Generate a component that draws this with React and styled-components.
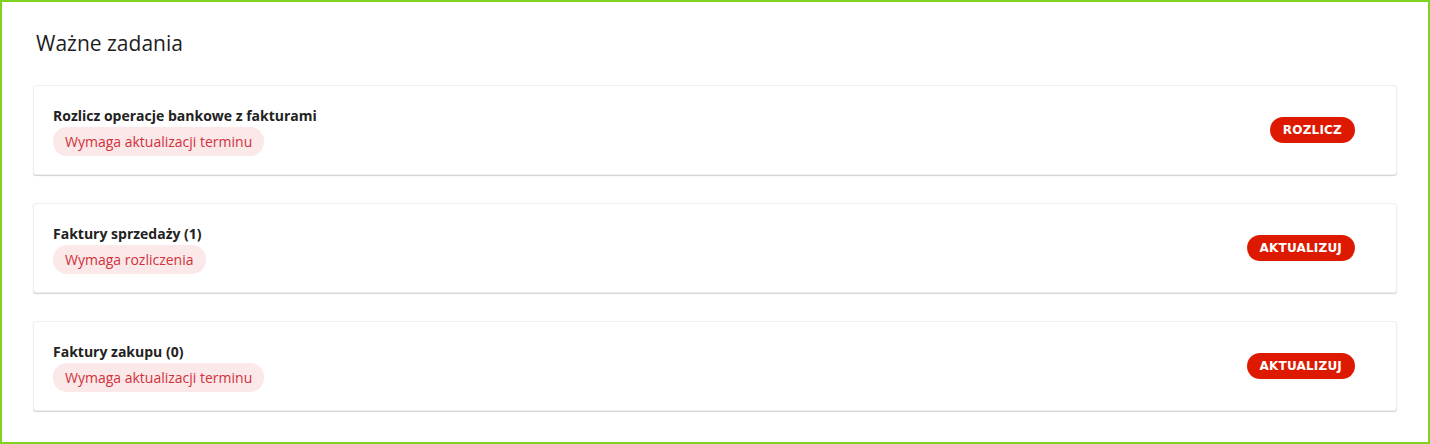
import React from "react";
import styled, { createGlobalStyle } from "styled-components";

const Global = createGlobalStyle`
  html, body { margin: 0; padding: 0; background: #fff; }
  body { font-family: "Open Sans", "Noto Sans", sans-serif; }
  * { box-sizing: border-box; }
`;

const Frame = styled.div`
  width: 1430px;
  height: 444px;
  border: 2px solid #7ed321;
  background: #fff;
  padding: 26px 31px 0 31px;
`;

const Title = styled.h2`
  margin: 0 0 0 3px;
  font-size: 21px;
  font-weight: 500;
  color: #1e1e1e;
  line-height: 30px;
`;

const List = styled.div`
  display: flex;
  flex-direction: column;
  gap: 28px;
  margin-top: 27px;
`;

const Card = styled.div`
  height: 90px;
  border: 1px solid #efefef;
  border-radius: 3px;
  box-shadow: 0 1px 1px rgba(0, 0, 0, 0.18);
  display: flex;
  align-items: center;
  justify-content: space-between;
  padding: 0 41px 0 19px;
  background: #fff;
`;

const Info = styled.div`
  display: flex;
  flex-direction: column;
  align-items: flex-start;
  gap: 2px;
  margin-top: 1px;
`;

const Name = styled.div`
  font-size: 14px;
  font-weight: 700;
  color: #222;
  line-height: 19px;
`;

const Badge = styled.span`
  display: inline-block;
  background: #fbe8e8;
  color: #d2303c;
  font-size: 14px;
  line-height: 29px;
  height: 29px;
  padding: 0 12px;
  border-radius: 14px;
`;

const Button = styled.button`
  border: none;
  background: #dd1a00;
  color: #fff;
  font-family: "DejaVu Sans", "Liberation Sans", sans-serif;
  font-weight: 700;
  font-size: 12px;
  height: 26px;
  padding: 0 13px;
  border-radius: 13px;
  letter-spacing: 0.2px;
  cursor: pointer;
`;

const tasks = [
  { name: "Rozlicz operacje bankowe z fakturami", badge: "Wymaga aktualizacji terminu", action: "ROZLICZ" },
  { name: "Faktury sprzedaży (1)", badge: "Wymaga rozliczenia", action: "AKTUALIZUJ" },
  { name: "Faktury zakupu (0)", badge: "Wymaga aktualizacji terminu", action: "AKTUALIZUJ" },
];

export default function App() {
  return (
    <>
      <Global />
      <Frame>
        <Title>Ważne zadania</Title>
        <List>
          {tasks.map((t) => (
            <Card key={t.name}>
              <Info>
                <Name>{t.name}</Name>
                <Badge>{t.badge}</Badge>
              </Info>
              <Button>{t.action}</Button>
            </Card>
          ))}
        </List>
      </Frame>
    </>
  );
}
